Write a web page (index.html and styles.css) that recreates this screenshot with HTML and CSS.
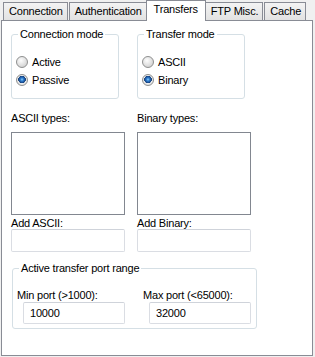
FILE: index.html
```html
<!DOCTYPE html>
<html>
<head>
    <title>Transfers</title>
    <link rel="stylesheet" href="styles.css">
</head>
<body>
    <div class="dialog">
        <div class="tabs">
            <div class="tab">Connection</div>
            <div class="tab">Authentication</div>
            <div class="tab active">Transfers</div>
            <div class="tab">FTP Misc.</div>
            <div class="tab">Cache</div>
        </div>
        <div class="panel">
            <div class="modes">
                <fieldset class="group mode">
                    <legend>Connection mode</legend>
                    <div class="options">
                        <div class="radio"><span class="dot"></span>Active</div>
                        <div class="radio"><span class="dot checked"></span>Passive</div>
                    </div>
                </fieldset>
                <fieldset class="group mode">
                    <legend>Transfer mode</legend>
                    <div class="options">
                        <div class="radio"><span class="dot"></span>ASCII</div>
                        <div class="radio"><span class="dot checked"></span>Binary</div>
                    </div>
                </fieldset>
            </div>

            <div class="types">
                <div class="col">
                    <div class="label">ASCII types:</div>
                    <div class="listbox"></div>
                    <div class="label add">Add ASCII:</div>
                    <div class="textbox"></div>
                </div>
                <div class="col">
                    <div class="label">Binary types:</div>
                    <div class="listbox"></div>
                    <div class="label add">Add Binary:</div>
                    <div class="textbox"></div>
                </div>
            </div>

            <fieldset class="group ports">
                <legend>Active transfer port range</legend>
                <div class="port-grid">
                    <div class="port">
                        <div class="label">Min port (&gt;1000):</div>
                        <div class="textbox value">10000</div>
                    </div>
                    <div class="port">
                        <div class="label">Max port (&lt;65000):</div>
                        <div class="textbox value">32000</div>
                    </div>
                </div>
            </fieldset>
        </div>
    </div>
</body>
</html>
```

FILE: styles.css
```css
* {
    box-sizing: border-box;
}

body {
    margin: 0;
    background: #f0f0f0;
    font-family: "Liberation Sans", Arial, sans-serif;
    font-size: 11px;
    letter-spacing: -0.2px;
    color: #000;
}

.dialog {
    width: 315px;
    height: 357px;
}

/* tab strip */
.tabs {
    display: flex;
    align-items: flex-end;
    height: 20px;
    padding-left: 3px;
    position: relative;
    z-index: 1;
}

.tab {
    height: 18px;
    padding: 0 4px 0 5px;
    margin-right: 1px;
    line-height: 16px;
    border: 1px solid #898c95;
    border-bottom: none;
    background: linear-gradient(#f3f3f3, #e2e2e2);
}

.tab.active {
    height: 21px;
    margin: 0 -1px -1px -2px;
    padding: 0 7px;
    line-height: 17px;
    background: #fff;
}

.panel {
    width: 312px;
    height: 336px;
    margin-left: 1px;
    padding: 7px 0 0 9px;
    background: #fff;
    border: 1px solid #898c95;
}

/* group boxes */
.group {
    margin: 0;
    padding: 0 4px;
    min-width: 0;
    border: 1px solid #d5dfe5;
    border-radius: 3px;
}

.group legend {
    margin-left: 2px;
    padding: 0 2px;
    line-height: 13px;
}

.modes {
    display: flex;
    gap: 18px;
}

.mode {
    width: 108px;
    height: 71px;
}

.options {
    padding-top: 12px;
}

.radio {
    display: flex;
    align-items: center;
    height: 18px;
}

.dot {
    width: 12px;
    height: 12px;
    margin-right: 4px;
    border-radius: 50%;
    border: 1px solid #8e8f8f;
    background: radial-gradient(circle at 40% 35%, #fdfdfd, #d4d4d4 75%);
}

.dot.checked {
    background: radial-gradient(circle at 50% 45%, #8fd0ff 0, #2f7fd0 1.5px, #1b4f96 3px, #163e73 3.6px, #eeeeee 4px, #d0d0d0 100%);
}

/* list boxes */
.types {
    display: grid;
    grid-template-columns: 114px 114px;
    column-gap: 12px;
    margin-top: 13px;
}

.label {
    line-height: 13px;
    white-space: nowrap;
}

.listbox {
    height: 83px;
    margin-top: 7px;
    border: 1px solid #828790;
    background: #fff;
}

.label.add {
    margin-top: 2px;
    line-height: 12px;
}

.textbox {
    height: 23px;
    border: 1px solid #dadde3;
    border-top-color: #cfd3da;
    border-radius: 2px;
    background: #fff;
}

/* port range */
.ports {
    width: 245px;
    height: 67px;
    margin: 10px 0 0 1px;
}

.port-grid {
    display: grid;
    grid-template-columns: 126px 1fr;
    margin-top: 14px;
}

.textbox.value {
    width: 102px;
    height: 22px;
    margin-left: 6px;
    padding-left: 6px;
    line-height: 20px;
}
```
